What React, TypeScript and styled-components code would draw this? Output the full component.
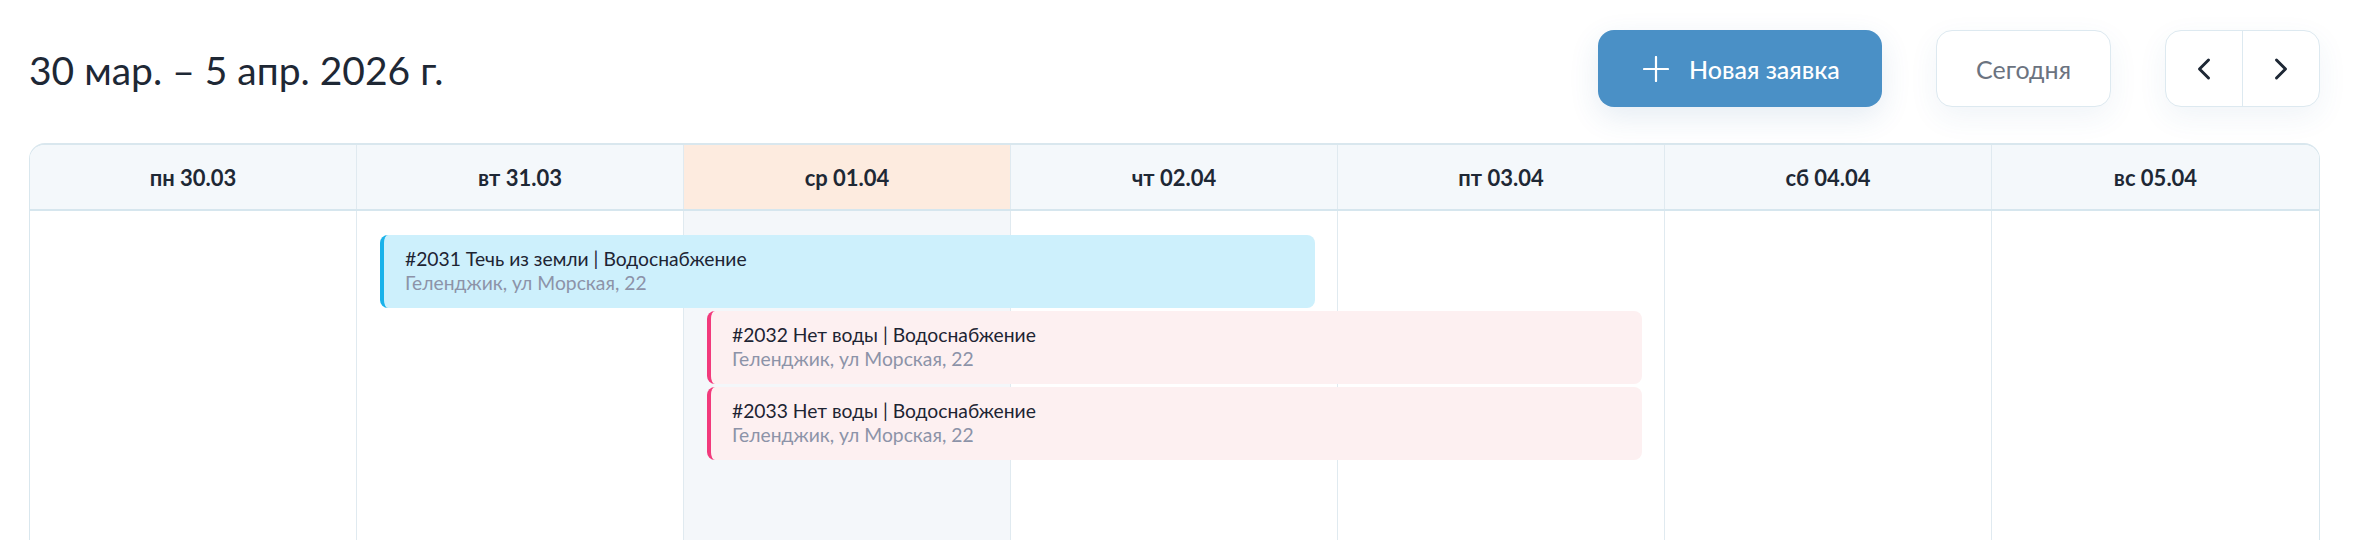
import styled, { createGlobalStyle } from 'styled-components'
import { ChevronLeft, ChevronRight } from 'lucide-react'

const GlobalStyle = createGlobalStyle`
	body {
		margin: 0;
		background: #ffffff;
		font-family: Lato, 'Noto Sans', sans-serif;
	}
`

const days = ['пн 30.03', 'вт 31.03', 'ср 01.04', 'чт 02.04', 'пт 03.04', 'сб 04.04', 'вс 05.04']
const todayIndex = 2

type Kind = 'info' | 'urgent'

const events: { id: number; title: string; service: string; address: string; from: number; to: number; row: number; kind: Kind }[] = [
	{ id: 2031, title: 'Течь из земли', service: 'Водоснабжение', address: 'Геленджик, ул Морская, 22', from: 2, to: 4, row: 2, kind: 'info' },
	{ id: 2032, title: 'Нет воды', service: 'Водоснабжение', address: 'Геленджик, ул Морская, 22', from: 3, to: 5, row: 3, kind: 'urgent' },
	{ id: 2033, title: 'Нет воды', service: 'Водоснабжение', address: 'Геленджик, ул Морская, 22', from: 3, to: 5, row: 4, kind: 'urgent' },
]

const kindColors = {
	info: { bg: '#cdf0fc', line: '#19b2ea' },
	urgent: { bg: '#fdf0f1', line: '#f23a7c' },
}

export default function App() {
	return (
		<>
			<GlobalStyle />
			<Page>
				<Toolbar>
					<Title>{'30 мар. – 5 апр. 2026 г.'}</Title>
					<Actions>
						<PrimaryButton>
							<svg width='26' height='26' viewBox='0 0 26 26' fill='none' stroke='currentColor' strokeWidth='2.2' strokeLinecap='round'>
								<path d='M13 1v24M1 13h24' />
							</svg>
							<span>{'Новая заявка'}</span>
						</PrimaryButton>
						<TodayButton>{'Сегодня'}</TodayButton>
						<NavGroup>
							<NavButton><ChevronLeft size={36} strokeWidth={2} /></NavButton>
							<NavButton><ChevronRight size={36} strokeWidth={2} /></NavButton>
						</NavGroup>
					</Actions>
				</Toolbar>

				<Calendar>
					<HeaderRow>
						{days.map((d, i) => (
							<HeaderCell key={d} $today={i === todayIndex}>{d}</HeaderCell>
						))}
					</HeaderRow>
					<Body>
						{days.map((d, i) => (
							<DayColumn key={d} $col={i + 1} $today={i === todayIndex} />
						))}
						{events.map(ev => (
							<EventCard
								key={ev.id}
								$from={ev.from}
								$to={ev.to}
								$row={ev.row}
								$kind={ev.kind}
							>
								<EventTitle>{`#${ev.id} ${ev.title} | ${ev.service}`}</EventTitle>
								<EventAddress>{ev.address}</EventAddress>
							</EventCard>
						))}
					</Body>
				</Calendar>
			</Page>
		</>
	)
}

const Page = styled.div`
	padding: 30px 58px 0 29px;
	color: #1e2835;
`

const Toolbar = styled.div`
	display: flex;
	align-items: center;
	justify-content: space-between;
	height: 77px;
`

const Title = styled.div`
	font-size: 39px;
	font-weight: 400;
	margin-top: 3px;
	color: #1e2835;
`

const Actions = styled.div`
	display: flex;
	align-items: center;
	gap: 54px;
`

const PrimaryButton = styled.div`
	display: flex;
	align-items: center;
	gap: 20px;
	box-sizing: border-box;
	width: 284px;
	height: 77px;
	padding-left: 45px;
	border-radius: 16px;
	background: #4a90c6;
	color: #ffffff;
	font-size: 25px;
	font-weight: 500;
	cursor: pointer;
	box-shadow: 0 10px 30px rgba(40, 100, 160, 0.12);
`

const TodayButton = styled.div`
	display: flex;
	align-items: center;
	justify-content: center;
	box-sizing: border-box;
	width: 175px;
	height: 77px;
	border: 1px solid #dde9f0;
	border-radius: 16px;
	background: #ffffff;
	color: #6b7380;
	font-size: 25px;
	cursor: pointer;
	box-shadow: 0 10px 30px rgba(40, 100, 160, 0.07);
`

const NavGroup = styled.div`
	display: flex;
	box-sizing: border-box;
	width: 155px;
	height: 77px;
	border: 1px solid #dde9f0;
	border-radius: 16px;
	overflow: hidden;
	background: #ffffff;
	box-shadow: 0 10px 30px rgba(40, 100, 160, 0.07);
`

const NavButton = styled.div`
	flex: 1;
	display: flex;
	align-items: center;
	justify-content: center;
	color: #1e2835;
	cursor: pointer;

	& + & {
		border-left: 1px solid #dde9f0;
	}
`

const Calendar = styled.div`
	margin-top: 36px;
	border: 1px solid #d9e7ee;
	border-top-width: 2px;
	border-bottom: none;
	border-radius: 16px 16px 0 0;
	overflow: hidden;
`

const HeaderRow = styled.div`
	display: grid;
	grid-template-columns: repeat(7, 1fr);
	height: 64px;
	background: #f4f8fb;
	border-bottom: 2px solid #d6e6ee;
`

const HeaderCell = styled.div<{ $today: boolean }>`
	display: flex;
	align-items: center;
	justify-content: center;
	font-size: 22px;
	font-weight: 700;
	color: #1e2835;
	background: ${p => (p.$today ? '#fdebdf' : 'transparent')};
	border-right: 1px solid #e0eaf0;

	&:last-child {
		border-right: none;
	}
`

const Body = styled.div`
	display: grid;
	grid-template-columns: repeat(7, 1fr);
	grid-template-rows: 21px 73px 73px 73px 1fr;
	row-gap: 3px;
	min-height: 380px;
`

const DayColumn = styled.div<{ $col: number; $today: boolean }>`
	grid-column: ${p => p.$col};
	grid-row: 1 / -1;
	background: ${p => (p.$today ? '#f4f7fa' : '#ffffff')};
	border-right: ${p => (p.$col === 7 ? 'none' : '1px solid #e0eaf0')};
`

const EventCard = styled.div<{ $from: number; $to: number; $row: number; $kind: Kind }>`
	grid-column: ${p => p.$from} / ${p => p.$to + 1};
	grid-row: ${p => p.$row};
	margin: 0 23px;
	display: flex;
	flex-direction: column;
	justify-content: center;
	padding: 0 20px 2px 21px;
	border-left: 4px solid ${p => kindColors[p.$kind].line};
	border-radius: 8px;
	background: ${p => kindColors[p.$kind].bg};
	z-index: 1;
`

const EventTitle = styled.div`
	font-size: 19.3px;
	line-height: 24px;
	color: #1d2433;
	white-space: nowrap;
`

const EventAddress = styled.div`
	font-size: 19.3px;
	line-height: 24px;
	color: #8c93a8;
	white-space: nowrap;
`
